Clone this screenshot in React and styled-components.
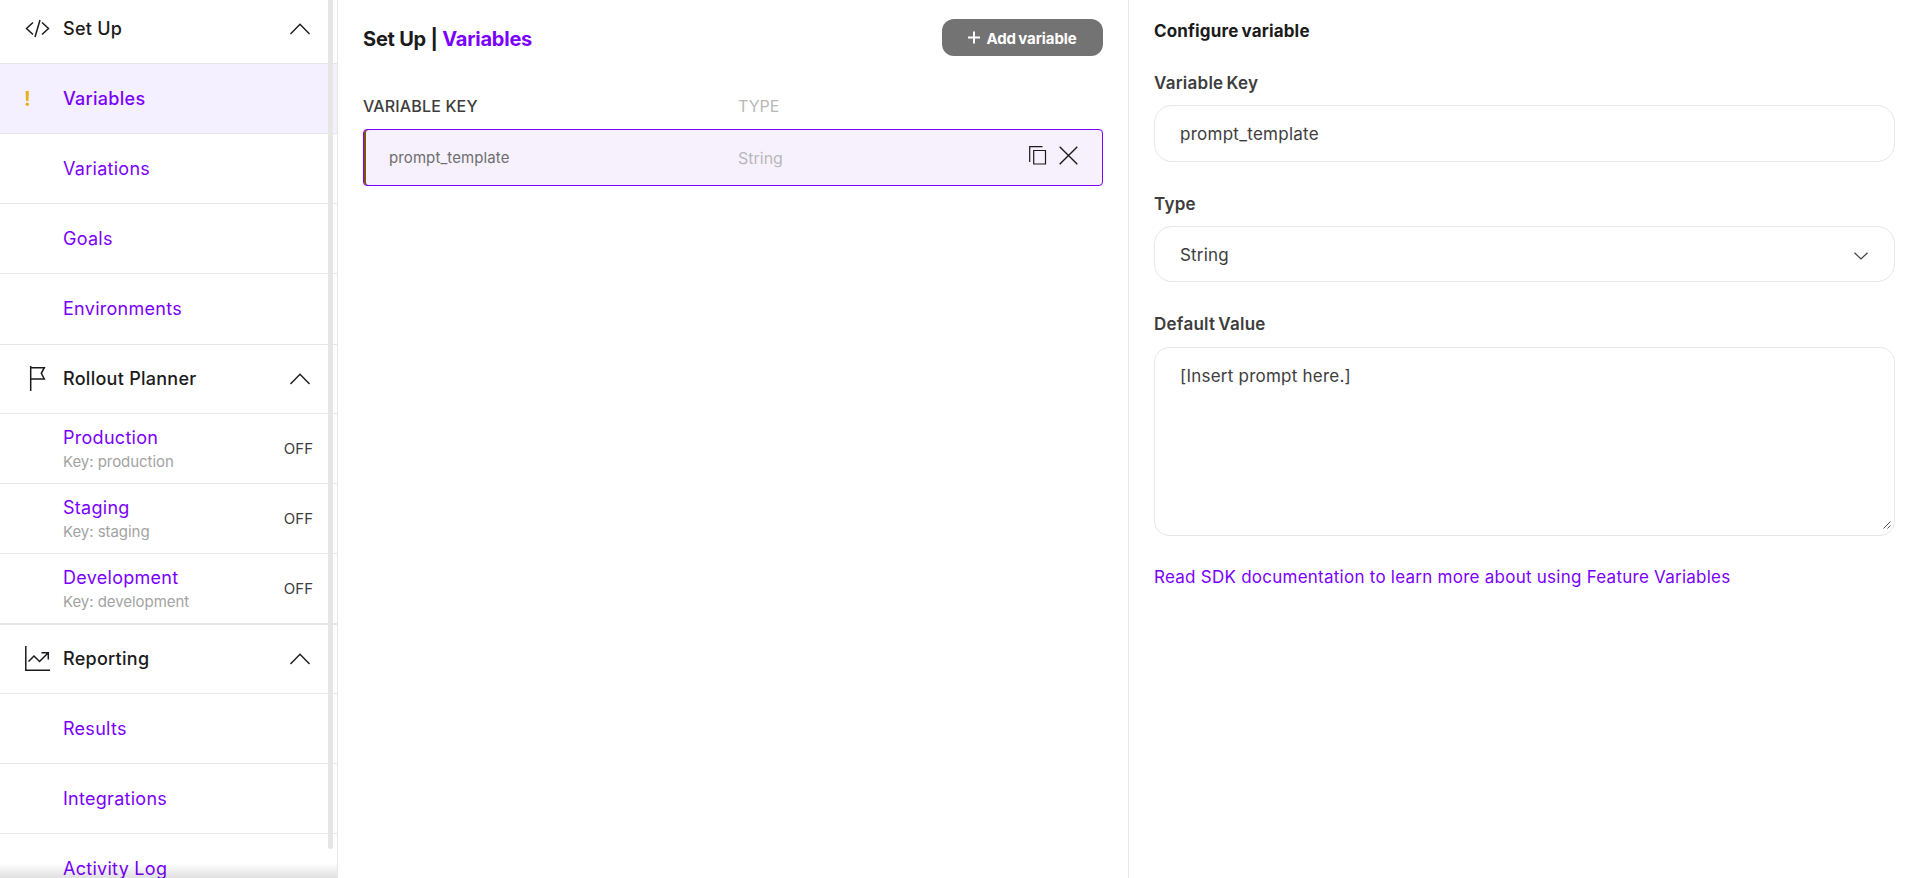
import { useState } from "react"
import styled, { createGlobalStyle } from "styled-components"

const GlobalStyle = createGlobalStyle`
    * {
        box-sizing: border-box;
    }

    body {
        margin: 0;
        overflow: hidden;
        background-color: #fff;
        font-family: Inter, "Liberation Sans", sans-serif;
        color: #1b1b1b;
    }
`

const Container = styled.div`
    display: flex;
    height: 878px;
    overflow: hidden;
`

const Sidebar = styled.nav`
    position: relative;
    width: 338px;
    flex: none;
    border-right: 1px solid #e6e6e6;
    overflow: hidden;
`

const ScrollThumb = styled.div`
    position: absolute;
    top: -10px;
    left: 328px;
    width: 5px;
    height: 859px;
    border-radius: 3px;
    background-color: #e6e6e6;
`

const BottomFade = styled.div`
    position: absolute;
    left: 0;
    right: 0;
    bottom: 0;
    height: 15px;
    background: linear-gradient(rgba(0, 0, 0, 0), rgba(0, 0, 0, 0.12));
`

const Section = styled.section`
    &:first-child {
        margin-top: -6px;
    }
`

const SectionHeader = styled.div`
    display: flex;
    align-items: center;
    height: 70px;
    padding: 0 27px 0 25px;
    border-top: 1px solid #e6e6e6;
    border-bottom: 1px solid #e6e6e6;
    cursor: pointer;

    > svg {
        flex: none;
    }

    > svg:first-child {
        margin-bottom: 1px;
    }
`

const SectionTitle = styled.span`
    flex: 1;
    margin-left: 13px;
    padding-bottom: 2px;
    font-size: 18px;
    font-weight: 500;
    letter-spacing: 0.27px;
`

const Item = styled.a`
    display: flex;
    align-items: center;
    height: 70px;
    padding: 0 24px 0 25px;
    border-bottom: ${props => props.$last ? "none" : "1px solid #e6e6e6"};
    background-color: ${props => props.$active ? "#f4f0ff" : "transparent"};
`

const Marker = styled.span`
    width: 38px;
    flex: none;

    svg {
        display: block;
    }
`

const ItemBody = styled.span`
    flex: 1;
    padding-top: ${props => props.$double ? "2px" : "0"};
`

const ItemName = styled.span`
    display: block;
    font-size: 18px;
    line-height: 24px;
    font-weight: ${props => props.$active ? 500 : 400};
    letter-spacing: 0.28px;
    color: #7a00ff;
`

const ItemKey = styled.span`
    display: block;
    font-size: 15px;
    line-height: 24px;
    letter-spacing: -0.05px;
    color: #a3a3a3;
`

const Status = styled.span`
    font-size: 15px;
    color: #3d3d3d;
`

const Main = styled.main`
    width: 791px;
    flex: none;
    padding: 19px 25px 0;
    border-right: 1px solid #e6e6e6;
`

const MainHeader = styled.div`
    display: flex;
    align-items: center;
    justify-content: space-between;
    height: 37px;
`

const Title = styled.h1`
    margin: 0;
    padding-top: 3px;
    font-size: 20px;
    line-height: 37px;
    font-weight: 700;
    letter-spacing: -0.22px;

    span {
        color: #7a00ff;
    }
`

const AddButton = styled.button`
    display: flex;
    align-items: center;
    justify-content: center;
    width: 161px;
    height: 37px;
    padding: 1px 0 0;
    border: none;
    border-radius: 12px;
    background-color: #737373;
    color: #fff;
    font-family: inherit;
    font-size: 15px;
    font-weight: 700;
    letter-spacing: -0.1px;
    word-spacing: -1px;

    svg {
        margin: 0 6px 2px 0;
    }
`

const TableHead = styled.div`
    display: flex;
    margin-top: 40px;
    font-size: 16px;
    line-height: 20px;
`

const HeadCell = styled.span`
    width: ${props => props.$width};
    color: ${props => props.$muted ? "#b8b8b8" : "#3d3d3d"};
    font-weight: ${props => props.$muted ? 400 : 500};
    letter-spacing: ${props => props.$muted ? "0" : "0.15px"};
`

const VariableRow = styled.div`
    display: flex;
    align-items: center;
    height: 57px;
    margin-top: 13px;
    padding: 0 24px 0 25px;
    border: 1px solid #7a00ff;
    border-radius: 4px;
    background-color: #f7f1fe;
    box-shadow: inset 2px 0 0 #80550f;
`

const RowKey = styled.span`
    width: 349px;
    font-size: 15px;
    letter-spacing: 0.1px;
    color: #6e6e6e;
`

const RowType = styled.span`
    flex: 1;
    padding-top: 1px;
    font-size: 16px;
    color: #b8b8b8;
`

const Actions = styled.span`
    display: flex;
    gap: 12px;
    margin-bottom: 4px;
`

const Panel = styled.aside`
    flex: 1;
    padding: 19px 25px 0;
`

const PanelTitle = styled.h2`
    margin: 0;
    font-size: 17px;
    line-height: 24px;
    font-weight: 700;
    letter-spacing: 0.15px;
    word-spacing: -1px;
`

const Field = styled.label`
    display: block;
    margin-top: ${props => props.$top};
`

const FieldLabel = styled.span`
    display: block;
    height: ${props => props.$height || "34px"};
    font-size: 17px;
    line-height: 24px;
    font-weight: 600;
    color: #3d3d3d;
    letter-spacing: 0.25px;
    word-spacing: -1.5px;
`

const Input = styled.input`
    display: block;
    width: 741px;
    height: 57px;
    padding: 0 25px;
    border: 1px solid #e6e6e6;
    border-radius: 18px;
    outline: none;
    font-family: inherit;
    font-size: 17px;
    letter-spacing: 0.27px;
    color: #3d3d3d;
`

const Select = styled.div`
    display: flex;
    align-items: center;
    justify-content: space-between;
    width: 741px;
    height: 56px;
    padding: 2px 26px 0 25px;
    border: 1px solid #e6e6e6;
    border-radius: 18px;
    font-size: 17px;
    letter-spacing: 0.2px;
    color: #3d3d3d;

    svg {
        margin-top: 2px;
    }
`

const TextBox = styled.div`
    position: relative;
    width: 741px;
    height: 189px;

    svg {
        position: absolute;
        right: 4px;
        bottom: 7px;
    }
`

const TextArea = styled.textarea`
    display: block;
    width: 100%;
    height: 100%;
    padding: 16px 25px;
    border: 1px solid #e6e6e6;
    border-radius: 15px;
    outline: none;
    resize: none;
    font-family: inherit;
    font-size: 17px;
    line-height: 25px;
    letter-spacing: 0.23px;
    color: #3d3d3d;
`

const DocsLink = styled.a`
    display: block;
    margin-top: 29px;
    font-size: 17px;
    line-height: 24px;
    letter-spacing: 0.25px;
    color: #7a00ff;
`

const CodeIcon = () => (
    <svg width="25" height="25" fill="none" stroke="#1b1b1b" strokeWidth="1.5">
        <path d="M8 6.5 1.5 12.5 8 18.5M17 6.5 23.5 12.5 17 18.5M15 4 10 21" />
    </svg>
)

const FlagIcon = () => (
    <svg width="25" height="25" fill="none" stroke="#1b1b1b" strokeWidth="1.5">
        <path d="M5.7 0V25M5.7 1.7H19.3L16.3 7.3 19.3 13H5.7" />
    </svg>
)

const ChartIcon = () => (
    <svg width="25" height="25" fill="none" stroke="#1b1b1b" strokeWidth="1.5">
        <path d="M.8 0V24.2H25M3.5 15.5 9 10 14.5 15.5 23.3 6.7M16.5 6.7H23.3V13.5" />
    </svg>
)

const ChevronUp = () => (
    <svg width="20" height="12" fill="none" stroke="#1b1b1b" strokeWidth="1.4">
        <path d="M.5 11 10 1.3 19.5 11" />
    </svg>
)

const WarningIcon = () => (
    <svg width="5" height="15" fill="#ebb022">
        <path d="M.6 0H3.9L3.5 10H1Z" />
        <circle cx="2.3" cy="13.2" r="1.7" />
    </svg>
)

const sections = [
    {
        title: "Set Up",
        Icon: CodeIcon,
        items: [
            { name: "Variables", active: true },
            { name: "Variations" },
            { name: "Goals" },
            { name: "Environments", last: true }
        ]
    },
    {
        title: "Rollout Planner",
        Icon: FlagIcon,
        items: [
            { name: "Production", itemKey: "production" },
            { name: "Staging", itemKey: "staging" },
            { name: "Development", itemKey: "development" }
        ]
    },
    {
        title: "Reporting",
        Icon: ChartIcon,
        items: [
            { name: "Results" },
            { name: "Integrations" },
            { name: "Activity Log", last: true }
        ]
    }
]

const App = () => {
    const [variableKey, setVariableKey] = useState("prompt_template")
    const [defaultValue, setDefaultValue] = useState("[Insert prompt here.]")

    return (
        <Container>
            <GlobalStyle />

            <Sidebar>
                {sections.map(({ title, Icon, items }) => (
                    <Section key={title}>
                        <SectionHeader>
                            <Icon />
                            <SectionTitle>{title}</SectionTitle>
                            <ChevronUp />
                        </SectionHeader>

                        {items.map(({ name, itemKey, active, last }) => (
                            <Item key={name} $active={active} $last={last}>
                                <Marker>{active && <WarningIcon />}</Marker>
                                <ItemBody $double={Boolean(itemKey)}>
                                    <ItemName $active={active}>{name}</ItemName>
                                    {itemKey && <ItemKey>Key: {itemKey}</ItemKey>}
                                </ItemBody>
                                {itemKey && <Status>OFF</Status>}
                            </Item>
                        ))}
                    </Section>
                ))}
                <BottomFade />
                <ScrollThumb />
            </Sidebar>

            <Main>
                <MainHeader>
                    <Title>Set Up | <span>Variables</span></Title>
                    <AddButton>
                        <svg width="12" height="13" stroke="#fff" strokeWidth="2">
                            <path d="M6 .5V12.5M0 6.5H12" />
                        </svg>
                        Add variable
                    </AddButton>
                </MainHeader>

                <TableHead>
                    <HeadCell $width="375px">VARIABLE KEY</HeadCell>
                    <HeadCell $muted>TYPE</HeadCell>
                </TableHead>

                <VariableRow>
                    <RowKey>{variableKey}</RowKey>
                    <RowType>String</RowType>
                    <Actions>
                        <svg width="18" height="19" fill="none" stroke="#1b1b1b" strokeWidth="1.2">
                            <path d="M.7 16V.7H13.5M4.7 4.5H16.5V18H4.7Z" />
                        </svg>
                        <svg width="19" height="19" fill="none" stroke="#1b1b1b" strokeWidth="1.4">
                            <path d="M.7.7 18.3 18.3M18.3.7.7 18.3" />
                        </svg>
                    </Actions>
                </VariableRow>
            </Main>

            <Panel>
                <PanelTitle>Configure variable</PanelTitle>

                <Field $top="28px">
                    <FieldLabel>Variable Key</FieldLabel>
                    <Input value={variableKey} onChange={event => setVariableKey(event.target.value)} />
                </Field>

                <Field $top="30px">
                    <FieldLabel>Type</FieldLabel>
                    <Select>
                        String
                        <svg width="14" height="8" fill="none" stroke="#3d3d3d" strokeWidth="1.2">
                            <path d="M.5.8 7 7 13.5.8" />
                        </svg>
                    </Select>
                </Field>

                <Field $top="30px">
                    <FieldLabel $height="35px">Default Value</FieldLabel>
                    <TextBox>
                        <TextArea value={defaultValue} onChange={event => setDefaultValue(event.target.value)} />
                        <svg width="8" height="8" stroke="#555" strokeWidth="1">
                            <path d="M.5 7.5 7.5.5M4.5 7.5 7.5 4.5" />
                        </svg>
                    </TextBox>
                </Field>

                <DocsLink>Read SDK documentation to learn more about using Feature Variables</DocsLink>
            </Panel>
        </Container>
    )
}

export default App
